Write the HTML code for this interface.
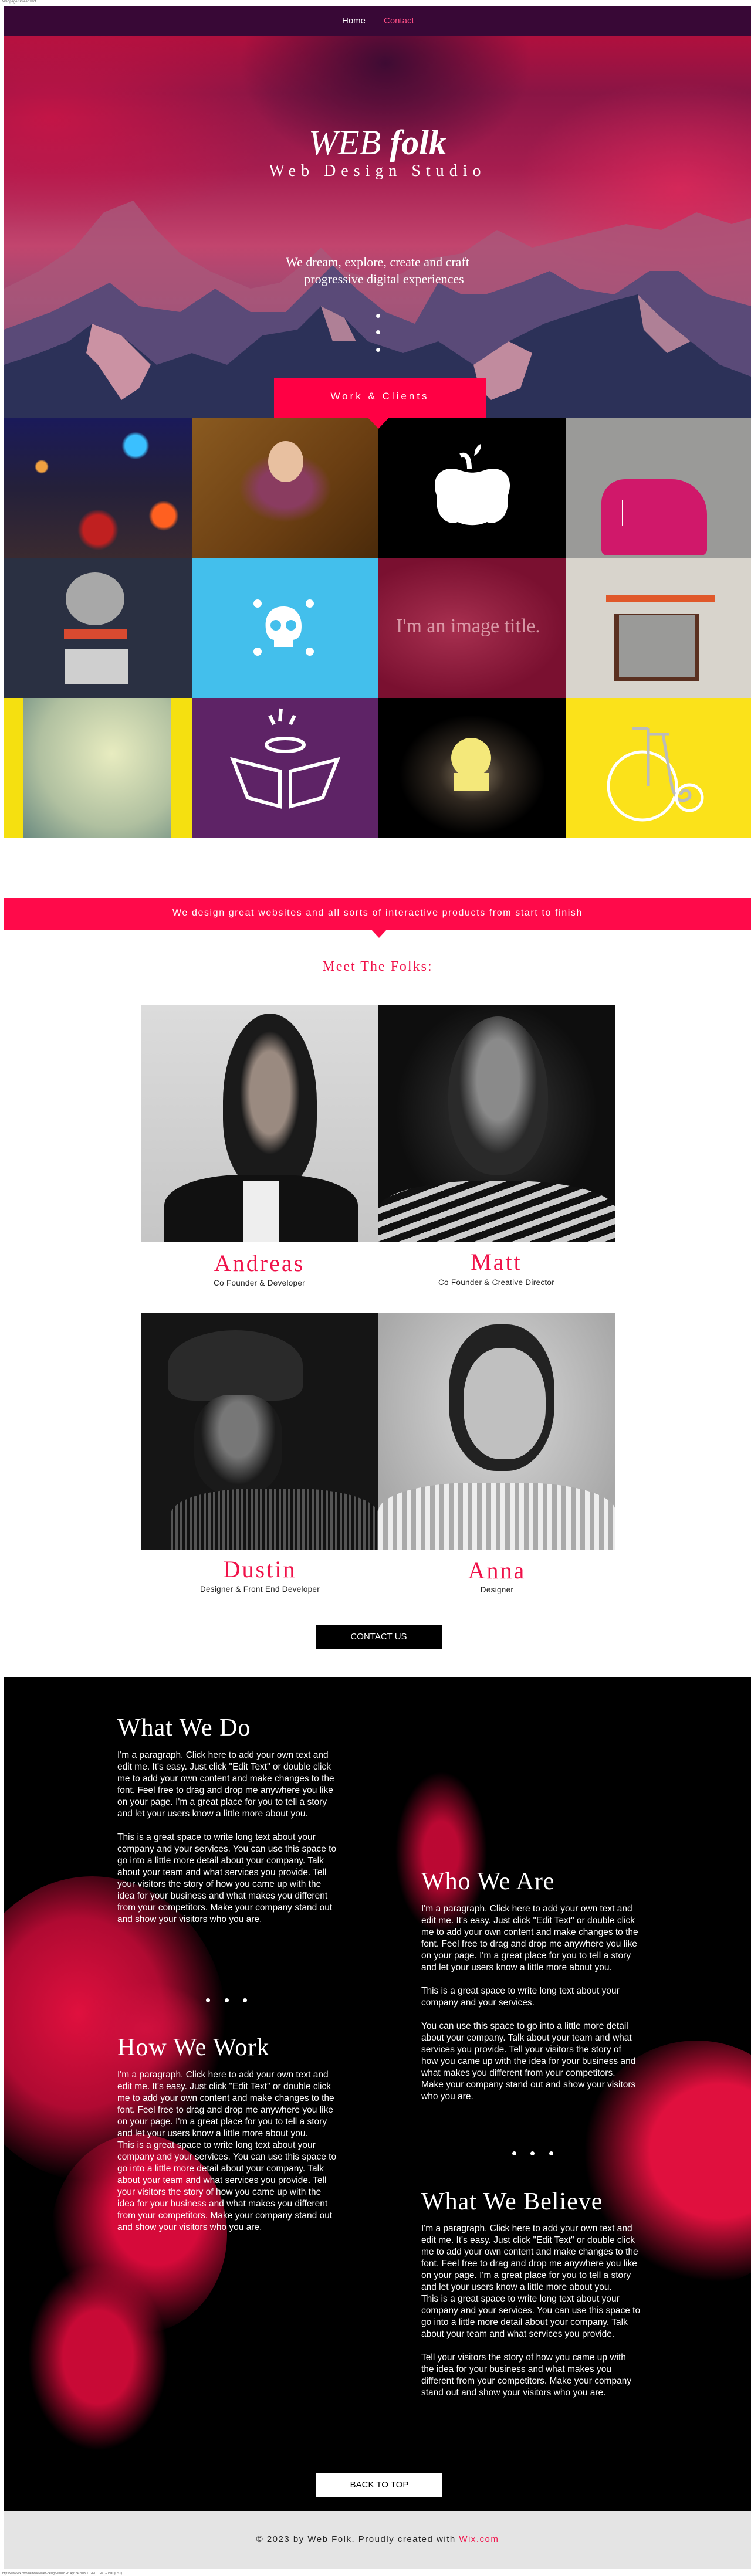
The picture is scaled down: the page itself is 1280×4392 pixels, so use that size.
<!DOCTYPE html>
<html><head><meta charset="utf-8">
<style>
*{margin:0;padding:0;box-sizing:border-box}
body{width:1280px;height:4392px;position:relative;background:#fff;font-family:"Liberation Sans",sans-serif;overflow:hidden}
.a{position:absolute}
.serif{font-family:"Liberation Serif",serif}
.narrow{font-family:"Liberation Sans Narrow","Liberation Sans",sans-serif}
.tile{position:absolute;overflow:hidden}
.para{position:absolute;color:#fff;font-family:"Liberation Sans Narrow","Liberation Sans",sans-serif;font-size:15.5px;line-height:20px;width:380px;white-space:nowrap}
.h2{position:absolute;color:#fff;font-family:"Liberation Serif",serif;font-size:42px;letter-spacing:1px}
.name{position:absolute;color:#f0124a;font-family:"Liberation Serif",serif;font-size:40px;letter-spacing:3px;text-align:center;width:404px}
.role{position:absolute;font-size:13.5px;color:#222;text-align:center;width:404px;letter-spacing:.3px}
.dot{position:absolute;width:8px;height:8px;border-radius:50%;background:#fff}
</style></head><body>
<div class="a" style="left:4px;top:0;font-size:6px;color:#555">Webpage Screenshot</div>

<!-- hero -->
<div class="a" style="left:7px;top:62px;width:1273px;height:650px;overflow:hidden;background:linear-gradient(180deg,#b0103e 0%,#8a1545 15%,#a61d4f 35%,#c2456e 55%,#9a4a72 70%,#4a3b66 85%,#2e2f55 100%)">
 <div class="a" style="left:400px;top:0;width:500px;height:230px;background:radial-gradient(ellipse at 50% 20%,#3e0b33 0%,rgba(62,11,51,0) 70%)"></div>
 <div class="a" style="left:-100px;top:0;width:600px;height:350px;background:radial-gradient(ellipse at 30% 40%,rgba(215,20,70,.7) 0%,rgba(215,20,70,0) 65%)"></div>
 <div class="a" style="left:850px;top:60px;width:500px;height:400px;background:radial-gradient(ellipse at 60% 50%,rgba(225,40,90,.75) 0%,rgba(225,40,90,0) 65%)"></div>
 <svg class="a" style="left:0;top:0" width="1273" height="650" viewBox="0 0 1273 650">
  <polygon fill="#a9587a" opacity=".8" points="0,430 60,400 120,360 170,300 220,280 260,330 300,370 350,400 420,430 470,420 520,380 540,360 580,400 650,420 720,380 780,370 840,330 900,360 980,340 1060,320 1120,330 1180,300 1240,320 1273,310 1273,650 0,650"/>
  <polygon fill="#5a4a78" points="0,500 80,470 140,440 180,420 230,460 300,470 360,430 420,470 480,470 520,430 560,390 600,430 650,470 700,490 740,420 780,440 820,440 880,420 930,400 980,430 1040,440 1100,400 1150,400 1200,440 1273,460 1273,650 0,650"/>
  <polygon fill="#2c3158" points="0,560 60,540 110,520 150,490 200,510 260,560 320,540 380,560 440,510 500,500 540,460 580,480 620,520 680,540 740,520 800,560 860,520 920,490 980,470 1040,450 1080,440 1120,480 1170,520 1220,560 1273,580 1273,650 0,650"/>
  <polygon fill="#e7a3b0" opacity=".85" points="150,490 200,510 250,560 230,600 200,620 160,560 140,540"/>
  <polygon fill="#e7a3b0" opacity=".8" points="800,560 860,520 900,540 880,600 830,620 810,600"/>
  <polygon fill="#e7a3b0" opacity=".7" points="1080,440 1120,480 1170,520 1130,540 1090,500"/>
  <polygon fill="#e7a3b0" opacity=".7" points="540,460 580,480 600,520 560,520"/>
 </svg>
 <div class="a serif" style="left:0;width:1273px;top:146px;text-align:center;color:#fff;font-size:60px;font-style:italic;line-height:70px">WEB <span style="font-family:'Liberation Serif',serif;font-weight:bold">folk</span></div>
 <div class="a serif" style="left:0;width:1273px;top:214px;text-align:center;color:#fff;font-size:28px;letter-spacing:9px">Web Design Studio</div>
 <div class="a serif" style="left:0;width:1273px;top:370px;text-align:center;color:#fff;font-size:22px;line-height:29px">We dream, explore, create and craft<br>&nbsp;&nbsp;&nbsp;&nbsp;progressive digital experiences</div>
 <div class="dot" style="left:634px;top:473px;width:7px;height:7px"></div>
 <div class="dot" style="left:634px;top:501px;width:7px;height:7px"></div>
 <div class="dot" style="left:634px;top:531px;width:7px;height:7px"></div>
</div>
<div class="a" style="left:7px;top:10px;width:1273px;height:52px;background:#380836"></div>
<div class="a" style="left:583px;top:27px;color:#fff;font-size:15px">Home</div>
<div class="a" style="left:654px;top:27px;color:#ff4f86;font-size:15px">Contact</div>

<!-- grid -->
<div class="tile" style="left:7px;top:712px;width:320px;height:239px;background:radial-gradient(circle at 20% 35%,#f0a040 0 3%,transparent 4%),radial-gradient(circle at 70% 20%,#3ac0ff 0 6%,transparent 8%),radial-gradient(circle at 85% 70%,#ff6020 0 6%,transparent 8%),radial-gradient(circle at 50% 80%,#c02020 0 10%,transparent 14%),linear-gradient(180deg,#1a1a5a,#24203a 50%,#3a2a30)"></div>
<div class="tile" style="left:327px;top:712px;width:318px;height:239px;background:radial-gradient(ellipse at 50% 50%,#8a3c60 0 20%,transparent 35%),linear-gradient(135deg,#8a5a20,#6a3e12 60%,#4a2a0a)">
 <div class="a" style="left:130px;top:40px;width:60px;height:70px;border-radius:50%;background:#e8c0a0"></div></div>
<div class="tile" style="left:645px;top:712px;width:320px;height:239px;background:#000">
 <svg width="320" height="239"><path d="M100,135 C85,95 115,80 140,90 C155,95 165,95 180,90 C205,80 235,95 220,135 C225,170 200,185 185,178 C170,185 150,185 135,178 C120,185 95,170 100,135Z" fill="#fff"/><path d="M140,65 C150,60 155,70 155,88" stroke="#fff" stroke-width="8" fill="none"/><path d="M165,55 C170,45 175,45 175,45 C175,55 170,62 163,65Z" fill="#fff"/></svg></div>
<div class="tile" style="left:965px;top:712px;width:315px;height:239px;background:#9a9a98">
 <div class="a" style="left:60px;top:105px;width:180px;height:130px;background:#d0186a;border-radius:40px 60px 10px 10px"></div>
 <div class="a" style="left:95px;top:140px;width:130px;height:45px;border:1px solid #fff"></div></div>
<div class="tile" style="left:7px;top:951px;width:320px;height:239px;background:#2a3042">
 <div class="a" style="left:105px;top:25px;width:100px;height:90px;border-radius:50%;background:#a8a8a8"></div>
 <div class="a" style="left:102px;top:122px;width:108px;height:16px;background:#d84a30"></div>
 <div class="a" style="left:103px;top:155px;width:108px;height:60px;background:#cfcfcf"></div></div>
<div class="tile" style="left:327px;top:951px;width:318px;height:239px;background:#43bfec">
 <svg width="318" height="239"><circle cx="112" cy="78" r="7" fill="#fff"/><circle cx="201" cy="78" r="7" fill="#fff"/><circle cx="112" cy="160" r="7" fill="#fff"/><circle cx="201" cy="160" r="7" fill="#fff"/><path d="M156,83 C130,83 122,105 127,127 C130,137 135,139 140,140 L140,152 L172,152 L172,140 C178,139 183,137 186,127 C190,105 182,83 156,83Z" fill="#fff"/><circle cx="143" cy="115" r="9" fill="#43bfec"/><circle cx="169" cy="115" r="9" fill="#43bfec"/></svg></div>
<div class="tile" style="left:645px;top:951px;width:320px;height:239px;background:radial-gradient(ellipse at 40% 50%,#a83050,#7a1030 70%)">
 <div class="a serif" style="left:30px;top:98px;color:#f0c0c8;font-size:34px;opacity:.75;white-space:nowrap">I'm an image title.</div></div>
<div class="tile" style="left:965px;top:951px;width:315px;height:239px;background:#d8d4cc">
 <div class="a" style="left:68px;top:63px;width:185px;height:12px;background:#e0582a"></div>
 <div class="a" style="left:82px;top:95px;width:145px;height:115px;background:#5a3020"></div>
 <div class="a" style="left:90px;top:98px;width:130px;height:105px;background:#9a9a98"></div></div>
<div class="tile" style="left:7px;top:1190px;width:320px;height:238px;background:#f5e010">
 <div class="a" style="left:32px;top:0;width:253px;height:238px;background:radial-gradient(circle at 60% 40%,#e8ecc0,#b0c0a0 60%,#6a8a80)"></div></div>
<div class="tile" style="left:327px;top:1190px;width:318px;height:238px;background:#5e2366">
 <svg width="318" height="238" fill="none" stroke="#fff" stroke-width="6"><ellipse cx="159" cy="80" rx="32" ry="11"/><path d="M150,40 L152,18 M140,45 L133,30 M168,45 L175,30"/><path d="M70,105 L150,125 L150,185 L95,170 Z"/><path d="M248,105 L168,125 L168,185 L223,170 Z"/></svg></div>
<div class="tile" style="left:645px;top:1190px;width:320px;height:238px;background:radial-gradient(ellipse at 50% 55%,#8a7a60 0,#302820 25%,#000 55%)">
 <div class="a" style="left:124px;top:68px;width:68px;height:68px;border-radius:50%;background:#f4e87a"></div>
 <div class="a" style="left:128px;top:128px;width:60px;height:30px;background:#f4e87a"></div></div>
<div class="tile" style="left:965px;top:1190px;width:315px;height:238px;background:#fbe21a">
 <svg width="315" height="238" fill="none" stroke="#fff" stroke-width="5"><circle cx="130" cy="150" r="58"/><path d="M112,52 L140,52 M140,52 L140,150" stroke="#bbb"/><path d="M140,62 L175,62 M165,62 L180,150 C188,180 200,178 210,170 C215,160 200,150 195,165" stroke="#bbb"/><circle cx="210" cy="170" r="22" stroke="#fff"/></svg></div>
<!-- work box -->
<div class="a" style="left:467px;top:644px;width:361px;height:68px;background:#ff0044"></div>
<div class="a" style="left:626px;top:711px;width:0;height:0;border-left:19px solid transparent;border-right:19px solid transparent;border-top:20px solid #ff0044"></div>
<div class="a" style="left:467px;top:666px;width:361px;text-align:center;color:#fff;font-size:17px;letter-spacing:4px">Work &amp; Clients</div>

<!-- banner -->
<div class="a" style="left:7px;top:1531px;width:1273px;height:54px;background:#ff0a4a"></div>
<div class="a" style="left:632px;top:1584px;width:0;height:0;border-left:14px solid transparent;border-right:14px solid transparent;border-top:15px solid #ff0a4a"></div>
<div class="a" style="left:7px;top:1548px;width:1273px;text-align:center;color:#fff;font-size:16px;letter-spacing:1.6px">We design great websites and all sorts of interactive products from start to finish</div>
<div class="a serif" style="left:7px;top:1635px;width:1273px;text-align:center;color:#f0124a;font-size:24px;letter-spacing:2px">Meet The Folks:</div>

<!-- photos -->
<div class="a" style="left:240px;top:1713px;width:404px;height:404px;background:linear-gradient(180deg,#dcdcdc,#c6c6c6);overflow:hidden">
 <div class="a" style="left:140px;top:15px;width:160px;height:300px;border-radius:50% 50% 40% 40%;background:radial-gradient(ellipse at 50% 45%,#9a8a80 0 30%,#1a1a1a 45%)"></div>
 <div class="a" style="left:40px;top:290px;width:330px;height:130px;border-radius:40% 40% 0 0;background:#111"></div>
 <div class="a" style="left:175px;top:300px;width:60px;height:110px;background:#eee"></div></div>
<div class="a" style="left:644px;top:1713px;width:405px;height:404px;background:radial-gradient(ellipse at 50% 45%,#3a3a3a,#0e0e0e 60%);overflow:hidden">
 <div class="a" style="left:120px;top:20px;width:170px;height:270px;border-radius:50% 50% 45% 45%;background:radial-gradient(ellipse at 50% 40%,#8a8a8a 0 30%,#2a2a2a 55%)"></div>
 <div class="a" style="left:0;top:300px;width:405px;height:110px;border-radius:45% 45% 0 0;background:repeating-linear-gradient(160deg,#ccc 0 10px,#111 10px 22px)"></div></div>
<div class="name" style="left:240px;top:2130px">Andreas</div>
<div class="role" style="left:240px;top:2180px">Co Founder &amp; Developer</div>
<div class="name" style="left:644px;top:2128px">Matt</div>
<div class="role" style="left:644px;top:2179px">Co Founder &amp; Creative Director</div>
<div class="a" style="left:241px;top:2238px;width:404px;height:405px;background:#151515;overflow:hidden">
 <div class="a" style="left:45px;top:30px;width:230px;height:120px;border-radius:50% 50% 20% 20%;background:#2a2a2a"></div>
 <div class="a" style="left:90px;top:140px;width:150px;height:170px;border-radius:40%;background:radial-gradient(ellipse at 50% 35%,#777 0 30%,#1a1a1a 60%)"></div>
 <div class="a" style="left:50px;top:300px;width:354px;height:110px;border-radius:40% 40% 0 0;background:repeating-linear-gradient(90deg,#555 0 4px,#111 4px 8px)"></div></div>
<div class="a" style="left:645px;top:2238px;width:404px;height:405px;background:radial-gradient(ellipse at 50% 40%,#dadada,#a8a8a8 80%);overflow:hidden">
 <div class="a" style="left:120px;top:20px;width:180px;height:250px;border-radius:45%;background:#222"></div>
 <div class="a" style="left:145px;top:60px;width:140px;height:190px;border-radius:45%;background:#c0c0c0"></div>
 <div class="a" style="left:0;top:290px;width:404px;height:120px;border-radius:40% 40% 0 0;background:repeating-linear-gradient(90deg,#eee 0 8px,#aaa 8px 16px)"></div></div>
<div class="name" style="left:241px;top:2652px">Dustin</div>
<div class="role" style="left:241px;top:2702px">Designer &amp; Front End Developer</div>
<div class="name" style="left:645px;top:2654px">Anna</div>
<div class="role" style="left:645px;top:2703px">Designer</div>
<div class="a" style="left:538px;top:2771px;width:215px;height:40px;background:#000;color:#fff;text-align:center;line-height:40px;font-size:15px" ><span class="narrow">CONTACT US</span></div>

<!-- dark -->
<div class="a" style="left:7px;top:2859px;width:1273px;height:1422px;background:#000;overflow:hidden">
 <div class="a" style="left:-80px;top:340px;width:460px;height:520px;border-radius:50%;background:radial-gradient(ellipse at 45% 45%,#e0103e 0%,#b00a32 40%,rgba(120,0,30,0) 70%)"></div>
 <div class="a" style="left:120px;top:520px;width:240px;height:160px;border-radius:50%;background:radial-gradient(ellipse,#d0103e 0,rgba(200,10,60,0) 70%)"></div>
 <div class="a" style="left:80px;top:780px;width:300px;height:340px;border-radius:50%;background:radial-gradient(ellipse at 60% 40%,#d60a3a 0 30%,rgba(200,10,50,0) 70%)"></div>
 <div class="a" style="left:40px;top:1000px;width:240px;height:320px;border-radius:50%;background:radial-gradient(ellipse,#c80a36 0 35%,rgba(200,10,50,0) 70%)"></div>
 <div class="a" style="left:660px;top:150px;width:170px;height:300px;border-radius:50%;background:radial-gradient(ellipse,rgba(220,10,60,.85) 0 25%,rgba(200,10,50,0) 65%)"></div>
 <div class="a" style="left:980px;top:620px;width:400px;height:420px;border-radius:50%;background:radial-gradient(ellipse at 60% 45%,#e0103e 0 35%,rgba(200,10,50,0) 68%)"></div>
</div>
<div class="h2" style="left:200px;top:2922px">What We Do</div>
<div class="para" style="left:200px;top:2983px">I'm a paragraph. Click here to add your own text and<br>edit me. It's easy. Just click "Edit Text" or double click<br>me to add your own content and make changes to the<br>font. Feel free to drag and drop me anywhere you like<br>on your page. I'm a great place for you to tell a story<br>and let your users know a little more about you.<br><br>This is a great space to write long text about your<br>company and your services. You can use this space to<br>go into a little more detail about your company. Talk<br>about your team and what services you provide. Tell<br>your visitors the story of how you came up with the<br>idea for your business and what makes you different<br>from your competitors. Make your company stand out<br>and show your visitors who you are.</div>
<div class="dot" style="left:351px;top:3407px;width:7px;height:7px"></div>
<div class="dot" style="left:383px;top:3407px;width:7px;height:7px"></div>
<div class="dot" style="left:414px;top:3407px;width:7px;height:7px"></div>
<div class="h2" style="left:200px;top:3467px">How We Work</div>
<div class="para" style="left:200px;top:3528px">I'm a paragraph. Click here to add your own text and<br>edit me. It's easy. Just click "Edit Text" or double click<br>me to add your own content and make changes to the<br>font. Feel free to drag and drop me anywhere you like<br>on your page. I'm a great place for you to tell a story<br>and let your users know a little more about you.<br>This is a great space to write long text about your<br>company and your services. You can use this space to<br>go into a little more detail about your company. Talk<br>about your team and what services you provide. Tell<br>your visitors the story of how you came up with the<br>idea for your business and what makes you different<br>from your competitors. Make your company stand out<br>and show your visitors who you are.</div>
<div class="h2" style="left:718px;top:3184px">Who We Are</div>
<div class="para" style="left:718px;top:3245px">I'm a paragraph. Click here to add your own text and<br>edit me. It's easy. Just click "Edit Text" or double click<br>me to add your own content and make changes to the<br>font. Feel free to drag and drop me anywhere you like<br>on your page. I'm a great place for you to tell a story<br>and let your users know a little more about you.<br><br>This is a great space to write long text about your<br>company and your services.<br><br>You can use this space to go into a little more detail<br>about your company. Talk about your team and what<br>services you provide. Tell your visitors the story of<br>how you came up with the idea for your business and<br>what makes you different from your competitors.<br>Make your company stand out and show your visitors<br>who you are.</div>
<div class="dot" style="left:873px;top:3668px;width:7px;height:7px"></div>
<div class="dot" style="left:904px;top:3668px;width:7px;height:7px"></div>
<div class="dot" style="left:936px;top:3668px;width:7px;height:7px"></div>
<div class="h2" style="left:718px;top:3730px">What We Believe</div>
<div class="para" style="left:718px;top:3790px">I'm a paragraph. Click here to add your own text and<br>edit me. It's easy. Just click "Edit Text" or double click<br>me to add your own content and make changes to the<br>font. Feel free to drag and drop me anywhere you like<br>on your page. I'm a great place for you to tell a story<br>and let your users know a little more about you.<br>This is a great space to write long text about your<br>company and your services. You can use this space to<br>go into a little more detail about your company. Talk<br>about your team and what services you provide.<br><br>Tell your visitors the story of how you came up with<br>the idea for your business and what makes you<br>different from your competitors. Make your company<br>stand out and show your visitors who you are.</div>
<div class="a" style="left:539px;top:4216px;width:215px;height:41px;background:#fff;color:#000;text-align:center;line-height:41px;font-size:15px"><span class="narrow">BACK TO TOP</span></div>

<!-- footer -->
<div class="a" style="left:7px;top:4281px;width:1273px;height:99px;background:#e4e4e4"></div>
<div class="a" style="left:7px;top:4321px;width:1273px;text-align:center;font-size:15px;letter-spacing:1.5px;color:#222">© 2023 by Web Folk. Proudly created with <span style="color:#f0124a">Wix.com</span></div>
<div class="a" style="left:4px;top:4385px;font-size:5px;color:#555">http://www.wix.com/demone2/web-design-studio Fri Apr 24 2015 11:26:01 GMT+0800 (CST)</div>
</body></html>
